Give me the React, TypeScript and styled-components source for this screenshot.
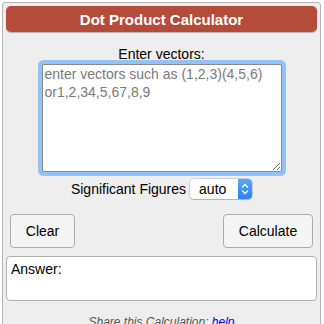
import React from "react";
import styled, { createGlobalStyle } from "styled-components";

const Global = createGlobalStyle`
  html, body { margin: 0; padding: 0; background: #ffffff; }
  body { font-family: "Liberation Sans", Arial, Helvetica, sans-serif; overflow: hidden; }
`;

const Page = styled.div`
  padding: 2px 0 0 2px;
`;

const Panel = styled.div`
  box-sizing: border-box;
  width: 319px;
  min-height: 340px;
  background: #eeeeee;
  border: 1px solid #b5b5b5;
  border-radius: 3px;
  padding: 3px;
  display: flex;
  flex-direction: column;
`;

const Header = styled.div`
  height: 26px;
  background: #b54b3b;
  border-radius: 5px;
  box-shadow: 0 1px 1px rgba(0, 0, 0, 0.25);
  color: #ffffff;
  font-weight: bold;
  font-size: 15px;
  display: flex;
  align-items: center;
  justify-content: center;
`;

const Label = styled.div`
  margin-top: 14px;
  height: 16px;
  line-height: 16px;
  font-size: 14px;
  color: #000;
  text-align: center;
`;

const Field = styled.textarea`
  box-sizing: border-box;
  display: block;
  align-self: center;
  margin-top: 2px;
  width: 240px;
  height: 108px;
  border: 1px solid #8a8a8a;
  border-radius: 2px;
  box-shadow: 0 0 0 4px #93c2f3;
  outline: none;
  padding: 1px 2px;
  font-family: "Liberation Sans", Arial, sans-serif;
  font-size: 14px;
  line-height: 17.5px;
  color: #000;
  background: #fff;
  &::placeholder { color: #7a7a7a; opacity: 1; }
`;

const SigRow = styled.div`
  margin-top: 7px;
  display: flex;
  align-items: center;
  justify-content: center;
  gap: 4px;
  font-size: 14px;
  color: #000;
`;

const Select = styled.div`
  box-sizing: border-box;
  width: 62px;
  height: 20px;
  background: #fff;
  border-radius: 4px;
  box-shadow: 0 0 0 0.5px rgba(0, 0, 0, 0.25), 0 1px 1px rgba(0, 0, 0, 0.15);
  display: flex;
  align-items: center;
  overflow: hidden;
`;

const SelectText = styled.span`
  flex: 1;
  padding-left: 9px;
  font-size: 14px;
`;

const SelectArrow = styled.span`
  width: 14px;
  height: 100%;
  background: linear-gradient(#5aa6fb, #2a82f2);
  display: flex;
  align-items: center;
  justify-content: center;
`;

const ButtonRow = styled.div`
  margin-top: 15px;
  padding: 0 4px;
  display: flex;
  justify-content: space-between;
`;

const Button = styled.button<{ $w: number }>`
  box-sizing: border-box;
  width: ${(p) => p.$w}px;
  height: 34px;
  background: #f4f4f4;
  border: 1px solid #ababab;
  border-radius: 4px;
  font-family: "Liberation Sans", Arial, sans-serif;
  font-size: 14px;
  color: #000;
  padding: 0;
`;

const Answer = styled.div`
  box-sizing: border-box;
  margin-top: 8px;
  height: 45px;
  background: #fff;
  border: 1px solid #b0b0b0;
  border-radius: 4px;
  padding: 4px 4px;
  font-size: 14px;
  line-height: 17px;
  color: #000;
`;

const Share = styled.div`
  margin-top: 14px;
  text-align: center;
  font-size: 12px;
  line-height: 14px;
  font-style: italic;
  color: #555;
`;

const Link = styled.a`
  color: #0000ee;
  text-decoration: none;
`;

export default function App() {
  return (
    <>
      <Global />
      <Page>
        <Panel>
          <Header>Dot Product Calculator</Header>
          <Label>Enter vectors:</Label>
          <Field placeholder={"enter vectors such as (1,2,3)(4,5,6)\nor1,2,34,5,67,8,9"} />
          <SigRow>
            <span>Significant Figures</span>
            <Select>
              <SelectText>auto</SelectText>
              <SelectArrow>
                <svg width="8" height="14" viewBox="0 0 8 14" fill="none" stroke="#fff" strokeWidth="1.4" strokeLinecap="round" strokeLinejoin="round">
                  <path d="M1.5 5 L4 2.5 L6.5 5" />
                  <path d="M1.5 9 L4 11.5 L6.5 9" />
                </svg>
              </SelectArrow>
            </Select>
          </SigRow>
          <ButtonRow>
            <Button $w={65}>Clear</Button>
            <Button $w={90}>Calculate</Button>
          </ButtonRow>
          <Answer>Answer:</Answer>
          <Share>
            Share this Calculation: <Link href="#">help</Link>
          </Share>
        </Panel>
      </Page>
    </>
  );
}
